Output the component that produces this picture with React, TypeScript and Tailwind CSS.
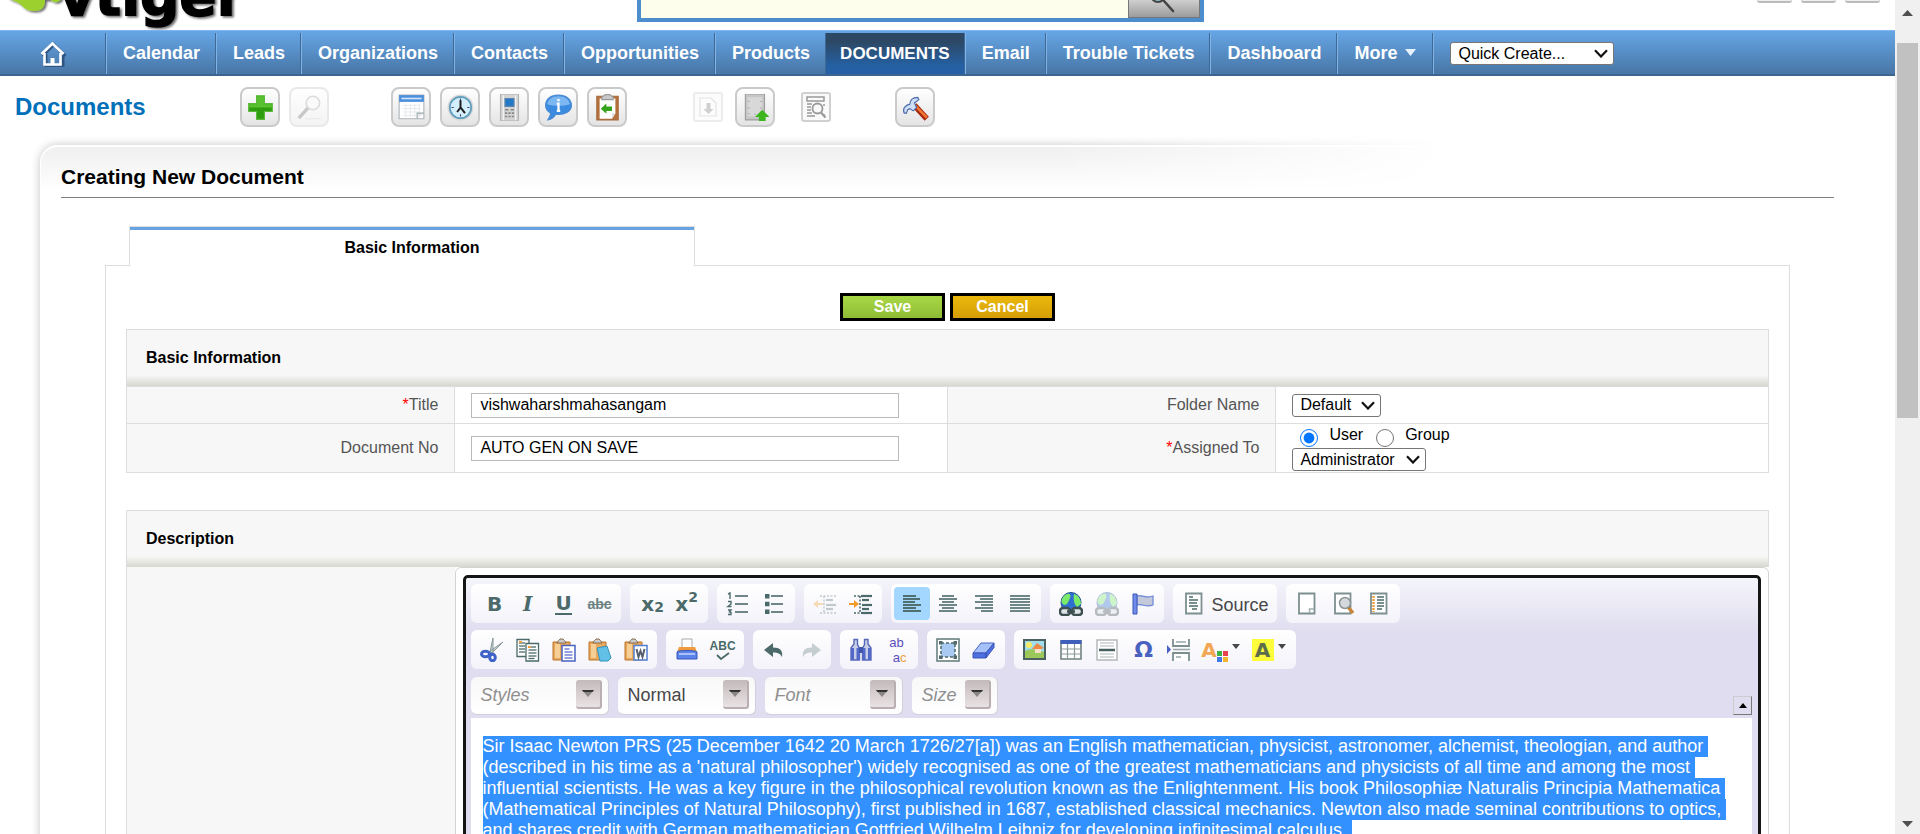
import React from "react";

const INK = "#4b6a69";

/* ---------- shared bits ---------- */

function Svg({ size, children }: { size: number; children: React.ReactNode }) {
  return (
    <svg width={size} height={size} viewBox="0 0 24 24" fill="none" aria-hidden="true" className="block shrink-0">
      {children}
    </svg>
  );
}

function Select({ id, label, value, className }: { id: string; label: string; value: string; className: string }) {
  return (
    <span className={`relative inline-block ${className}`}>
      <select
        id={id}
        aria-label={label}
        defaultValue={value}
        className="block h-[23px] w-full appearance-none rounded-[3px] border border-[#767676] bg-white pl-[7px] text-base leading-5 text-black"
      >
        <option>{value}</option>
      </select>
      <svg width="14" height="9" viewBox="0 0 14 9" aria-hidden="true" className="pointer-events-none absolute top-[7px] right-[6px]">
        <path d="M1 1.200 7 7.500l6-6.300" fill="none" stroke="#111" strokeWidth="2.200" />
      </svg>
    </span>
  );
}

/* ---------- header ---------- */

function Logo() {
  return (
    <svg width="250" height="30" viewBox="0 0 250 30" role="img" aria-label="vtiger">
      <defs>
        <filter id="logoShadow" x="-5%" y="-50%" width="115%" height="200%">
          <feDropShadow dx="2" dy="1.500" stdDeviation="1.300" floodColor="#000" floodOpacity="0.600" />
        </filter>
      </defs>
      <g filter="url(#logoShadow)">
        <path d="M5-6C8 0 16 1 20 4c4 4 7 7 14 7 8 0 11-4 11-11h6c2 3 8 3 10-1V-6Z" fill="#9bd02f" />
        <text x="59" y="15" fontFamily="DejaVu Sans, sans-serif" fontWeight="700" fontSize="55" fill="#000" stroke="#000" strokeWidth="1.500">
          vtiger
        </text>
      </g>
    </svg>
  );
}

function Header() {
  return (
    <header className="flex h-[30px] items-start bg-white">
      <div className="w-[637px] shrink-0">
        <Logo />
      </div>
      <form className="flex h-[22px] w-[567px] shrink-0 border-x-4 border-b-4 border-[#4c8dcd]" onSubmit={(e) => e.preventDefault()}>
        <input aria-label="Search" className="h-full min-w-0 flex-1 bg-[#fdffec] px-2 outline-none" />
        <button
          type="submit"
          aria-label="Find"
          className="flex h-full w-[72px] justify-center border-r border-b border-l border-[#777] bg-linear-to-b from-[#cfcfcf] to-[#9c9c9c]"
        >
          <svg width="34" height="17" viewBox="0 0 34 17" aria-hidden="true">
            <circle cx="11" cy="-5" r="7" fill="#8cc0d0" stroke="#444" strokeWidth="2" />
            <path d="m17 1 9 10" stroke="#444" strokeWidth="2.600" strokeLinecap="round" />
          </svg>
        </button>
      </form>
      <div className="mr-[15px] ml-auto flex gap-[9px]">
        {["User", "Help", "Sign out"].map((n) => (
          <button key={n} aria-label={n} className="h-[3px] w-[35px] rounded-b-[4px] border-b-2 border-[#bbb] bg-[#eee]" />
        ))}
      </div>
    </header>
  );
}

const navItems = ["Calendar", "Leads", "Organizations", "Contacts", "Opportunities", "Products", "Documents", "Email", "Trouble Tickets", "Dashboard"];

function NavBar() {
  return (
    <nav className="flex h-[46px] items-stretch border-t border-b-2 border-t-[#7cb6ee] border-b-[#3c658f] bg-linear-to-b from-[#66a6e6] to-[#4876a6] pt-0.5 text-lg leading-5 font-bold text-white">
      <a href="#home" aria-label="Home" className="flex w-[105px] items-center justify-center">
        <svg width="26" height="26" viewBox="0 0 26 26" aria-hidden="true">
          <path d="M5 12v13h17V12M1.500 14 13 2.500 24.500 14" fill="none" stroke="#2f5580" strokeWidth="3" transform="translate(1 1)" />
          <path d="M4.500 12v11.500h16V12M1.500 13 12.500 2.500 23.500 13" fill="none" stroke="#fff" strokeWidth="2.600" />
          <path d="M10.500 17h4v6h-4z" fill="#fff" />
        </svg>
      </a>
      {navItems.map((n) => {
        const active = n === "Documents";
        return (
          <div key={n} className="flex border-l border-[#3f6a97]">
            <a
              href={`#${n}`}
              className={
                active
                  ? "flex items-center bg-linear-to-b from-[#2c4864] from-20% to-[#2460a3] to-80% px-3.5 text-[17px] uppercase"
                  : "flex items-center border-l border-[#80b3e6] pr-[15px] pb-0.5 pl-4"
              }
            >
              {n}
            </a>
          </div>
        );
      })}
      <div className="flex border-x border-[#3f6a97]">
        <a href="#more" className="flex items-center gap-2 border-l border-[#80b3e6] px-4 pb-0.5">
          More
          <svg width="11" height="7" viewBox="0 0 11 7" aria-hidden="true">
            <path d="M0 0h11L5.500 7z" fill="#e6f2ff" />
          </svg>
        </a>
      </div>
      <div className="flex items-center border-l border-[#80b3e6] pl-4 font-normal">
        <Select id="quick" label="Quick create" value="Quick Create..." className="w-[164px]" />
      </div>
    </nav>
  );
}

/* ---------- module toolbar ---------- */

const toolIcons: Record<string, React.ReactNode> = {
  add: (
    <>
      <path d="M8.500 1.500h7v7h7v7h-7v7h-7v-7h-7v-7h7z" fill="#2f9d10" stroke="#5cb83a" />
      <path d="M9 2h6v7h7v3H2V9h7z" fill="#6bd03e" opacity=".7" />
    </>
  ),
  find: (
    <>
      <circle cx="15" cy="8" r="6" stroke="#aaa" strokeWidth="1.500" fill="#f4f4f4" />
      <path d="m10.500 12.500-8 9" stroke="#777" strokeWidth="3" />
      <path d="M8 22h14" stroke="#ccc" />
    </>
  ),
  calendar: (
    <>
      <path d="M1 1h22v21H1z" fill="#fff" stroke="#aeb4ba" />
      <path d="M1 1h22v6H1z" fill="#4a8edc" />
      <path d="M3 4h18" stroke="#cfe4fa" strokeWidth="1.500" />
      <path d="M4 10h16M4 13h16M4 16h16M4 19h12M7 9v12M11 9v12M15 9v12M19 9v8" stroke="#e2e5e9" strokeWidth=".7" />
      <path d="M17 22v-5h6" stroke="#9aa" fill="#e8e8e8" />
    </>
  ),
  clock: (
    <>
      <circle cx="12" cy="12" r="11.500" fill="#d8d8d8" />
      <circle cx="12" cy="12" r="9.500" fill="#d4eefb" stroke="#5f9dbd" strokeWidth="1.500" />
      <path d="M12 4v2M12 18v2M4 12h2M18 12h2" stroke="#446" />
      <path d="M12 5.500V12l4 5M12 12l-3 4" stroke="#222" strokeWidth="1.800" />
    </>
  ),
  phone: (
    <>
      <path d="M4 0h16v24H4z" fill="#d3d3d3" stroke="#b2b2b2" />
      <path d="M6 1h1v22H6zM17 1h1v22h-1z" fill="#f5f5f5" />
      <path d="M8 4h8v7H8z" fill="#2478c8" stroke="#5b83ab" />
      <path d="M8 14h3M13 14h3M8 17h2M11 17h2M14 17h2M8 20h2M11 20h2M14 20h2" stroke="#888" strokeWidth="1.500" />
    </>
  ),
  chat: (
    <>
      <path d="M12 1C5 1 .5 4.500.5 10c0 3 1.800 5.500 4.500 7-.3 2.500-1 4-2.500 6 3.500-.5 5.500-2 7-5 8 .8 14-2.500 14-8 0-5.500-5-9-11.500-9Z" fill="#3b8be0" stroke="#4a8ad0" />
      <path d="M12 2C6 2 2.500 5 2 9c6 2 14 2 20 0C21.500 5 18 2 12 2Z" fill="#8ec2f5" opacity=".8" />
      <path d="M12 4.500v2M10.500 8.500H12v6.500M10.500 15h3" stroke="#fff" strokeWidth="2" />
    </>
  ),
  clipboard: (
    <>
      <path d="M2.500 2h19v21h-19z" fill="#b5713c" stroke="#a5673a" />
      <path d="M5 4h14v13l-3 5H5z" fill="#fff" />
      <path d="M19 17h-3v5z" fill="#ddd" />
      <path d="M7 3c0-1.500 2-1 3-2.500h4C15 2 17 1.500 17 3v2H7z" fill="#c8c8c8" stroke="#999" />
      <path d="m6 13 5-4.500V11h5v4h-5v2.500z" fill="#35a31d" />
    </>
  ),
  import: (
    <>
      <path d="M4 3h11l5 5v13H4z" stroke="#bbb" strokeWidth="1.200" />
      <path d="M10.500 8h4v6h3L12.500 19 7.500 14h3z" fill="#888" />
    </>
  ),
  export: (
    <>
      <path d="M3 0h17v23H3z" fill="#c6c6c6" stroke="#9d9d9d" />
      <path d="M5 3h13v17H5z" fill="#d8d8d8" />
      <path d="M6 6v1M6 12v1M6 17v1M17 6v1M17 12v1M11 18h1" stroke="#aaa" strokeWidth="1.500" />
      <path d="m18 14 6.500 6.500H21V24h-6v-3.500h-3.500z" fill="#3eb51e" />
    </>
  ),
  duplicates: (
    <>
      <path d="M3 2h17v4H3zM3 9h5M3 12h4M3 15h4M3 18h5M3 21h8M20 9v2M20 19v2" stroke="#999" strokeWidth="1.500" />
      <circle cx="13.500" cy="13.500" r="5" stroke="#999" strokeWidth="1.800" fill="#fafafa" />
      <path d="m17 17.500 4.500 5" stroke="#999" strokeWidth="2.200" />
    </>
  ),
  settings: (
    <>
      <path d="m11 10 11 12" stroke="#a82810" strokeWidth="5" />
      <path d="m11.500 10 10.500 11" stroke="#f47a33" strokeWidth="2.200" />
      <path d="M2 17c-2-4 1-7 5-8 0-3 2-6 7-6l1 2-4 3 2 4-3 3-3-2-2 1-1 3z" fill="#cfdff7" stroke="#4a69a8" />
    </>
  ),
};

function ToolButton({ icon, label, faded, small }: { icon: string; label: string; faded?: boolean; small?: boolean }) {
  const tone = faded ? "opacity-40" : "";
  return small ? (
    <button aria-label={label} className={`flex size-[30px] items-center justify-center rounded-[3px] border-2 border-[#d0d0d0] bg-[#fafafa] ${tone}`}>
      <Svg size={24}>{toolIcons[icon]}</Svg>
    </button>
  ) : (
    <button
      aria-label={label}
      className={`flex size-10 items-center justify-center rounded-[8px] border-2 border-[#cacaca] bg-linear-to-b from-white to-[#e4e4e4] ${tone}`}
    >
      <Svg size={27}>{toolIcons[icon]}</Svg>
    </button>
  );
}

function ModuleBar() {
  return (
    <div className="flex h-[59px] items-center pt-[3px]">
      <h1 className="w-[240px] shrink-0 pl-[15px] text-2xl font-bold text-[#0070ba]">
        <a href="#documents">Documents</a>
      </h1>
      <div className="flex gap-[9px]">
        <ToolButton icon="add" label="Create document" />
        <ToolButton icon="find" label="Search documents" faded />
      </div>
      <div className="ml-[62px] flex gap-[9px]">
        <ToolButton icon="calendar" label="Open calendar" />
        <ToolButton icon="clock" label="World clock" />
        <ToolButton icon="phone" label="Calculator" />
        <ToolButton icon="chat" label="Chat" />
        <ToolButton icon="clipboard" label="Last viewed" />
      </div>
      <div className="ml-[66px] flex items-center gap-3">
        <ToolButton icon="import" label="Import" faded small />
        <ToolButton icon="export" label="Export" />
      </div>
      <div className="ml-[26px]">
        <ToolButton icon="duplicates" label="Find duplicates" small />
      </div>
      <div className="ml-16">
        <ToolButton icon="settings" label="Settings" />
      </div>
    </div>
  );
}

/* ---------- form ---------- */

function SectionHead({ children }: { children: React.ReactNode }) {
  return (
    <h2 className="flex h-[57px] flex-col justify-between border border-b-0 border-[#ddd] bg-[#f7f7f7] pt-4 text-base leading-6 font-bold">
      <span className="pl-[19px]">{children}</span>
      <span className="h-[10px] bg-linear-to-b from-[#f5f5f3] to-[#d6d7d0]" />
    </h2>
  );
}

const labelCell = "border border-[#ddd] bg-[#f7f7f7] pr-4 text-right align-middle font-normal text-[#545454]";
const valueCell = "border border-[#ddd] pl-4 align-middle";
const textBox = "block h-[25px] w-[428px] border border-[#bababa] bg-white px-2 text-base text-black";

function BasicInformation() {
  return (
    <section>
      <SectionHead>Basic Information</SectionHead>
      <table className="w-full table-fixed border-collapse text-base leading-5">
        <colgroup>
          <col className="w-[20%]" />
          <col className="w-[30%]" />
          <col className="w-[20%]" />
          <col className="w-[30%]" />
        </colgroup>
        <tbody>
          <tr className="h-[37px]">
            <th scope="row" className={labelCell}>
              <label htmlFor="title">
                <span className="text-[#f00]">*</span>Title
              </label>
            </th>
            <td className={valueCell}>
              <input id="title" defaultValue="vishwaharshmahasangam" className={textBox} />
            </td>
            <th scope="row" className={labelCell}>
              <label htmlFor="folder">Folder Name</label>
            </th>
            <td className={valueCell}>
              <div className="flex">
                <Select id="folder" label="Folder Name" value="Default" className="w-[89px]" />
              </div>
            </td>
          </tr>
          <tr className="h-[49px]">
            <th scope="row" className={labelCell}>
              <label htmlFor="docno">Document No</label>
            </th>
            <td className={valueCell}>
              <input id="docno" defaultValue="AUTO GEN ON SAVE" readOnly className={textBox} />
            </td>
            <th scope="row" className={labelCell}>
              <label htmlFor="assignee">
                <span className="text-[#f00]">*</span>Assigned To
              </label>
            </th>
            <td className={valueCell}>
              <div className="flex h-[23px] items-start pl-2">
                <input id="user" type="radio" name="assign" defaultChecked className="mt-1 size-[18px] accent-[#0075ff]" />
                <label htmlFor="user" className="ml-[11px]">
                  User
                </label>
                <input id="group" type="radio" name="assign" className="mt-1 ml-[13px] size-[18px]" />
                <label htmlFor="group" className="ml-[11px]">
                  Group
                </label>
              </div>
              <div className="flex">
                <Select id="assignee" label="Assigned To" value="Administrator" className="w-[134px]" />
              </div>
            </td>
          </tr>
        </tbody>
      </table>
    </section>
  );
}

/* ---------- rich text editor ---------- */

const lines = (xs: [number, number, number][], w = 1.6) =>
  xs.map(([x, y, len], i) => <path key={i} d={`M${x} ${y}h${len}`} stroke={INK} strokeWidth={w} />);

const clip = (
  <>
    <path d="M1 4h17v18H1z" fill="#e9a95c" stroke="#b9752c" />
    <path d="M3 6h5v14H3z" fill="#f6cf97" />
    <path d="M5 5c0-2 2-2 3-4h3c1 2 3 2 3 4z" fill="#ccc" stroke="#8a6a4a" />
  </>
);
const globe = (
  <>
    <circle cx="12" cy="10.500" r="10" fill="#2f6fd0" stroke="#1f4b94" />
    <path d="M5 4c4-4 8-2 6 2s-2 6-5 7C1 12 2 7 5 4ZM15 2c5 1 7 6 7 10l-4 3c-3-3-4-8-3-13Z" fill="#7bea6b" />
    <rect x="1" y="16" width="10" height="7" rx="3" stroke="#3e4f50" strokeWidth="2.500" fill="#dfe5e5" />
    <rect x="13" y="16" width="10" height="7" rx="3" stroke="#3e4f50" strokeWidth="2.500" fill="#dfe5e5" />
    <path d="M8 19.500h8" stroke="#3e4f50" strokeWidth="2.500" />
  </>
);
const page = <path d="M4 1.500h15.500v20H4z" fill="#fff" stroke="#7d8f8f" strokeWidth="1.800" />;

const editorIcons: Record<string, React.ReactNode> = {
  numbered: (
    <>
      {lines([[9, 4, 13], [9, 12, 13], [9, 20, 13]])}
      <path d="M2 2l2-1v6M2 9.500h3V12L2 14.500h3.500M2 18h3l-1.500 2 1.500.5v2H2" stroke={INK} strokeWidth="1.400" />
    </>
  ),
  bulleted: (
    <>
      {lines([[9, 4, 12], [9, 12, 12], [9, 20, 12]])}
      <path d="M3 2h4.500v4.500H3zM3 9.700h4.500v4.500H3zM3 17.500h4.500V22H3z" fill={INK} />
    </>
  ),
  outdent: (
    <g opacity=".32">
      {lines([[13, 8, 7], [13, 13, 10], [13, 17, 7]], 2.2)}
      <path d="M7 4h16M7 21h16M11 4v17" stroke={INK} strokeWidth="1.500" strokeDasharray="2 1.500" />
      <path d="M0 12l5-4v3h5v2H5v3z" fill="#f39b2a" />
    </g>
  ),
  indent: (
    <>
      {lines([[12, 4, 11], [13, 8, 7], [13, 13, 10], [13, 17, 7], [12, 21, 11]], 2.200)}
      <path d="M5 4h6M5 21h6M11 4v17" stroke={INK} strokeWidth="1.500" strokeDasharray="2 1.500" />
      <path d="M10 12 5 8v3H0v2h5v3z" fill="#f39b2a" />
    </>
  ),
  left: lines([[3, 4, 13], [3, 7, 17], [3, 10, 12], [3, 13, 18], [3, 16, 13], [3, 19, 18]], 1.900),
  center: lines([[6, 4, 12], [3, 7, 18], [6, 10, 12], [3, 13, 18], [6, 16, 12], [3, 19, 18]]),
  right: lines([[3, 4, 18], [8, 7, 13], [3, 10, 18], [9, 13, 12], [3, 16, 18], [9, 19, 12]]),
  justify: lines([[2, 4, 20], [2, 7, 20], [2, 10, 20], [2, 13, 20], [2, 16, 20], [2, 19, 20]]),
  link: globe,
  unlink: <g opacity=".35">{globe}</g>,
  anchor: (
    <>
      <path d="M6 4c5-2 7 3 16 0v9c-8 3-10-2-16 0z" fill="#c3c9da" stroke="#6a86d8" strokeWidth="1.200" />
      <path d="M2 2h4v20H2z" fill="#6f8de8" stroke="#3d54b8" />
    </>
  ),
  source: (
    <>
      {page}
      {lines([[7, 5, 4], [7, 8, 9], [7, 11, 8], [7, 14, 9], [10, 17, 5]], 1.500)}
    </>
  ),
  newpage: (
    <>
      {page}
      <path d="M14.500 21v-4h4.500" stroke="#9fb0b0" strokeWidth="1.500" />
    </>
  ),
  preview: (
    <>
      {page}
      <path d="m17 15 5 6" stroke="#c98436" strokeWidth="3.500" />
      <circle cx="14" cy="11" r="5.500" fill="#d5d8dc" stroke="#8b9494" strokeWidth="1.500" />
    </>
  ),
  templates: (
    <>
      {page}
      <path d="M6.500 4v16" stroke="#f0a040" strokeWidth="2.500" strokeDasharray="2 1" />
      {lines([[10, 5, 7], [10, 8, 7], [10, 11, 7], [10, 14, 7], [10, 17, 5]], 1.500)}
    </>
  ),
  cut: (
    <>
      <path d="m13 0-3 14 3 1zM23 4 9 14l2 2z" fill="#cdd6d6" stroke="#859797" />
      <ellipse cx="5.500" cy="16" rx="4" ry="2.700" stroke="#3f62c9" strokeWidth="3" />
      <ellipse cx="12.500" cy="19.500" rx="2.800" ry="3.300" stroke="#3f62c9" strokeWidth="3" />
    </>
  ),
  copy: (
    <>
      <path d="M1 1.500h12v17H1z" fill="#fff" stroke={INK} strokeWidth="1.300" />
      {lines([[3, 5, 6], [3, 8, 6], [3, 11, 6], [3, 14, 6]], 1.300)}
      <path d="M10 5.500h12.500V23H10z" fill="#fff" stroke={INK} strokeWidth="1.300" />
      {lines([[15, 9, 5], [12.5, 12, 8], [12.5, 15, 8], [12.500, 18, 8], [12.500, 20.500, 6]], 1.300)}
      <path d="M3 4h3M12 9h3" stroke="#f0a040" strokeWidth="2" />
    </>
  ),
  paste: (
    <>
      {clip}
      <path d="M10 7.500h13V23H10z" fill="#fff" stroke="#4a62c0" strokeWidth="1.500" />
      <path d="M12.500 11h5M12.500 14h8M12.500 17h8M12.500 20h8" stroke="#7183d4" strokeWidth="1.300" />
    </>
  ),
  pastetext: (
    <>
      {clip}
      <path d="m9 10 10-2 4 12-3 3h-8z" fill="#62bfe6" stroke="#3594bd" />
    </>
  ),
  pasteword: (
    <>
      {clip}
      <path d="M10 7.500h13V22H10z" fill="#fff" stroke="#4f7fd0" strokeWidth="1.500" />
      <path d="m12.500 11 2 8 2-6 2 6 2-8" stroke="#555f70" strokeWidth="2" />
    </>
  ),
  print: (
    <>
      <path d="M7 1h10v10H7z" fill="#fff" stroke="#aaa" />
      <path d="M4 9h16l2 5H2z" fill="#ef9a3c" />
      <path d="M2 14c0-2 20-2 20 0v7H2z" fill="#5c83ea" stroke="#3657bd" />
      <path d="M4 16h16" stroke="#c5d4ff" strokeWidth="1.500" />
    </>
  ),
  undo: <path d="M2 12 11 5v4.500c7 0 10 3 9 9.500-2-3.500-4-4.500-9-4.500V19z" fill={INK} />,
  redo: <path d="M23 12 14 5v4.500c-7 0-10 3-9 9.500 2-3.500 4-4.500 9-4.500V19z" fill={INK} opacity=".3" />,
  find: (
    <>
      <path d="M5 1.500h3.500v5l2 4V22H2V10l3-4zM19 1.500h-3.500v5l-2 4V22H22V10l-3-4z" fill="#c7cfe6" stroke="#5668b8" strokeWidth="1.400" />
      <path d="M2 10h3v12H2zM19 10h3v12h-3zM7.500 10h3v12h-3zM13.500 10h3v12h-3z" fill="#5269c8" />
      <path d="M10 9h4v6h-4z" fill="#4056ad" />
    </>
  ),
  selectall: (
    <>
      <path d="M1 1h22v22H1z" fill="#fff" stroke="#60797a" strokeWidth="1.500" />
      <path d="M5 5h14v14H5z" fill="#a9cbf3" stroke="#526b6c" strokeWidth="1.600" strokeDasharray="3 2" />
      <path d="M3 3h3.500v3.500H3zM17.500 3H21v3.500h-3.500zM3 17.500h3.500V21H3zM17.500 17.500H21V21h-3.500z" fill="#526b6c" />
    </>
  ),
  eraser: (
    <>
      <path d="M9 5h13L14 15H1z" fill="#a6c1fa" stroke="#4b66c4" />
      <path d="M1 15h13v5H1zM14 15l8-10v4.500L14 20z" fill="#4d6fe0" stroke="#3a55b5" />
    </>
  ),
  image: (
    <>
      <path d="M1 2h21v19H1z" fill="#9fdcec" stroke="#4c6060" strokeWidth="2" />
      <path d="M2 13c5-3 12-2 19 1v6H2z" fill="#9cc85a" />
      <circle cx="6" cy="7" r="3" fill="#fcec60" />
      <path d="m9 11 5-6 7 5-3 1v4h-6v-4z" fill="#ec8a45" />
      <path d="M12 11h6v4h-6z" fill="#f7e0c8" />
    </>
  ),
  table: (
    <>
      <path d="M2 3h20v18H2z" fill="#fff" stroke="#72807f" strokeWidth="1.600" />
      <path d="M1.500 2h21v4h-21z" fill="#3f5fbd" />
      <path d="M2 11h20M2 16h20M8.500 6v15M15.500 6v15" stroke="#8c9a99" strokeWidth="1.200" />
    </>
  ),
  rule: (
    <>
      <path d="M2 2h20v20H2z" fill="#fff" stroke="#b5b9b9" strokeWidth="1.500" />
      <path d="M5 5h14M5 8h14M5 16h14M5 19h14" stroke="#ccd0d0" strokeWidth="1.400" />
      <path d="M4 12h16" stroke="#47605f" strokeWidth="2.500" />
    </>
  ),
  pagebreak: (
    <>
      <path d="M6 1v7h16V1M6 23v-8h16v8" fill="#fff" stroke="#7d8f8f" strokeWidth="1.800" />
      <path d="M9 4h10M9 19h5M6 11.500h17" stroke="#9aa8a8" strokeWidth="1.400" />
      <path d="m0 7 4 4.500L0 16z" fill="#4a5fc4" />
    </>
  ),
};

function IconButton({ name, disabled, active }: { name: string; disabled?: boolean; active?: boolean }) {
  return (
    <button
      aria-label={name}
      disabled={disabled}
      className={`flex h-[33px] w-9 items-center justify-center rounded-[4px] ${active ? "bg-[#a3d7ff]" : ""}`}
    >
      <Svg size={24}>{editorIcons[name]}</Svg>
    </button>
  );
}

function GlyphButton({ label, className, children }: { label: string; className: string; children: React.ReactNode }) {
  return (
    <button aria-label={label} className={`flex h-[33px] w-9 items-center justify-center ${className}`}>
      {children}
    </button>
  );
}

function Group({ children }: { children: React.ReactNode }) {
  return <div className="flex h-[39px] items-center rounded-[6px] bg-linear-to-b from-white to-[#f3f3fa] px-[3px]">{children}</div>;
}

function Combo({ label, muted, className }: { label: string; muted?: boolean; className: string }) {
  return (
    <button
      className={`flex h-[38px] items-center justify-between rounded-[6px] border-r border-b border-[#d0d0da] bg-linear-to-b from-[#f8f8f8] to-white pr-1.5 pb-0.5 pl-2.5 text-lg ${className} ${muted ? "text-[#8f8f8f] italic" : "text-[#474747]"}`}
    >
      {label}
      <span className="flex h-[29px] w-[26px] items-center justify-center rounded-[3px] border-r-2 border-b-2 border-[#b9aeb0] bg-linear-to-b from-[#c3babb] to-[#e9e2e4]">
        <svg width="12" height="7" viewBox="0 0 12 7" aria-hidden="true">
          <path d="M0 0h12L6 7z" fill="#8b8587" />
          <path d="M0 0h12l-1.500 2h-9z" fill="#333" />
        </svg>
      </span>
    </button>
  );
}

const Caret = () => (
  <svg width="8" height="5" viewBox="0 0 8 5" aria-hidden="true" className="mb-1.5">
    <path d="M0 0h8L4 5z" fill="#474747" />
  </svg>
);

function EditorToolbar() {
  return (
    <div className="flex flex-col gap-[7px] pt-1.5 pb-[3px]">
      <div className="flex gap-[9px]">
        <Group>
          <GlyphButton label="Bold" className="pl-1.5 font-['DejaVu_Sans'] text-xl font-bold text-[#4b6a69]">B</GlyphButton>
          <GlyphButton label="Italic" className="font-['DejaVu_Serif'] text-xl font-bold text-[#4b6a69] italic">I</GlyphButton>
          <GlyphButton label="Underline" className="font-['DejaVu_Sans'] text-xl font-bold text-[#4b6a69]">
            <span className="border-b-2 border-[#4b6a69] leading-5">U</span>
          </GlyphButton>
          <GlyphButton label="Strike through" className="text-sm font-bold text-[#6d8382] line-through">abc</GlyphButton>
        </Group>
        <Group>
          <GlyphButton label="Subscript" className="pl-1 font-['DejaVu_Sans'] text-xl font-bold text-[#4b6a69]">
            x<sub className="text-sm">2</sub>
          </GlyphButton>
          <GlyphButton label="Superscript" className="font-['DejaVu_Sans'] text-xl font-bold text-[#4b6a69]">
            x<sup className="text-sm">2</sup>
          </GlyphButton>
        </Group>
        <Group>
          <IconButton name="numbered" />
          <IconButton name="bulleted" />
        </Group>
        <Group>
          <IconButton name="outdent" disabled />
          <IconButton name="indent" />
        </Group>
        <Group>
          <IconButton name="left" active />
          <IconButton name="center" />
          <IconButton name="right" />
          <IconButton name="justify" />
        </Group>
        <Group>
          <IconButton name="link" />
          <IconButton name="unlink" disabled />
          <IconButton name="anchor" />
        </Group>
        <Group>
          <button className="flex h-[33px] w-[98px] items-center gap-1.5 pl-1.5 text-lg text-[#474747]">
            <Svg size={24}>{editorIcons.source}</Svg>
            <span className="pt-0.5">Source</span>
          </button>
        </Group>
        <Group>
          <IconButton name="newpage" />
          <IconButton name="preview" />
          <IconButton name="templates" />
        </Group>
      </div>
      <div className="flex gap-[9px]">
        <Group>
          <IconButton name="cut" />
          <IconButton name="copy" />
          <IconButton name="paste" />
          <IconButton name="pastetext" />
          <IconButton name="pasteword" />
        </Group>
        <Group>
          <IconButton name="print" />
          <GlyphButton label="Check spelling" className="flex-col text-xs leading-3 font-bold text-[#4b6a69]">
            ABC
            <svg width="14" height="8" viewBox="0 0 14 8" aria-hidden="true">
              <path d="m1 3 4 4 8-6" fill="none" stroke={INK} strokeWidth="1.800" />
            </svg>
          </GlyphButton>
        </Group>
        <Group>
          <IconButton name="undo" />
          <IconButton name="redo" disabled />
        </Group>
        <Group>
          <IconButton name="find" />
          <GlyphButton label="Replace" className="flex-col text-[13px] leading-[15px] text-[#5a4fb8]">
            <span>ab</span>
            <span className="pl-1.5">
              a<span className="text-[#f0a040]">c</span>
            </span>
          </GlyphButton>
        </Group>
        <Group>
          <IconButton name="selectall" />
          <IconButton name="eraser" />
        </Group>
        <Group>
          <IconButton name="image" />
          <IconButton name="table" />
          <IconButton name="rule" />
          <GlyphButton label="Special character" className="pl-0.5 font-['DejaVu_Sans'] text-[22px] font-bold text-[#4a62bf]">Ω</GlyphButton>
          <IconButton name="pagebreak" />
          <button aria-label="Text colour" className="flex h-[33px] w-12 items-center justify-center gap-1 font-['DejaVu_Sans'] text-xl leading-6 font-bold text-[#f2a754]">
            <span className="flex items-end">
              A
              <svg width="11" height="11" viewBox="0 0 11 11" aria-hidden="true">
                <path d="M0 0h5v5H0z" fill="#3cb043" />
                <path d="M6 0h5v5H6z" fill="#e8424a" />
                <path d="M0 6h5v5H0z" fill="#4179e8" />
                <path d="M6 6h5v5H6z" fill="#f5b52e" />
              </svg>
            </span>
            <Caret />
          </button>
          <button aria-label="Background colour" className="flex h-[33px] w-12 items-center justify-center gap-1 font-['DejaVu_Sans'] text-xl font-bold text-[#5d6c4b]">
            <span className="flex size-[22px] items-center justify-center bg-[#fdfd3c]">A</span>
            <Caret />
          </button>
        </Group>
      </div>
      <div className="flex items-end gap-[9px] pt-px">
        <Combo label="Styles" muted className="w-[138px]" />
        <Combo label="Normal" className="w-[138px]" />
        <Combo label="Font" muted className="w-[138px]" />
        <Combo label="Size" muted className="w-[86px]" />
        <button
          aria-label="Collapse toolbar"
          className="ml-auto flex size-[19px] items-center justify-center border border-t-[#ccc] border-r-[#777] border-b-[#777] border-l-[#ccc]"
        >
          <svg width="8" height="5" viewBox="0 0 8 5" aria-hidden="true">
            <path d="M0 5h8L4 0z" fill="#000" />
          </svg>
        </button>
      </div>
    </div>
  );
}

const description = [
  "Sir Isaac Newton PRS (25 December 1642 20 March 1726/27[a]) was an English mathematician, physicist, astronomer, alchemist, theologian, and author ",
  "(described in his time as a 'natural philosopher') widely recognised as one of the greatest mathematicians and physicists of all time and among the most ",
  "influential scientists. He was a key figure in the philosophical revolution known as the Enlightenment. His book Philosophiæ Naturalis Principia Mathematica ",
  "(Mathematical Principles of Natural Philosophy), first published in 1687, established classical mechanics. Newton also made seminal contributions to optics, ",
  "and shares credit with German mathematician Gottfried Wilhelm Leibniz for developing infinitesimal calculus. ",
];

function Description() {
  return (
    <section className="mt-[37px]">
      <SectionHead>Description</SectionHead>
      <div className="flex">
        <div className="w-[20%] shrink-0 border-l border-[#ddd] bg-[#f7f7f7]" />
        <div className="min-w-0 flex-1 rounded-[6px] border border-[#d3d3d3] bg-white p-[7px]">
          <div className="rounded-[5px] border-[3px] border-[#141616] bg-[#dfddef]">
            <div className="rounded-t-[3px] bg-linear-to-b from-[#f5f5fb] to-[#dfddef] to-[55px] pr-1.5 pl-[5px]">
              <EditorToolbar />
              <div
                role="textbox"
                aria-label="Description"
                className="h-[300px] overflow-hidden bg-white pt-[18px] pl-3 text-lg leading-[21px] text-white"
              >
                {description.map((line) => (
                  <div key={line} className="w-fit bg-[#3390ff] whitespace-pre">
                    {line}
                  </div>
                ))}
              </div>
            </div>
          </div>
        </div>
      </div>
    </section>
  );
}

function FormPanel() {
  return (
    <main className="relative isolate ml-[30px] pr-[61px] pl-[31px]">
      <div className="absolute inset-0 -z-10 overflow-hidden mask-r-from-55% mask-r-to-76% pt-[10px] pl-[10px]">
        <div className="h-full rounded-tl-[18px] border-t-2 border-l border-white bg-linear-to-b from-[#f0f0f0] to-white to-[45px] shadow-[0_0_10px_#c4c4c4]" />
      </div>
      <h2 className="border-b border-[#808080] pt-[22px] text-[21px] leading-10 font-bold">Creating New Document</h2>
      <div className="mx-11 mt-7">
        <div className="flex h-10">
          <div className="w-6 border-b border-[#ddd]" />
          <button className="w-[566px] border-x border-t border-[#ddd] bg-white text-base font-bold">
            <span className="flex h-full items-center justify-center border-t-[3px] border-[#66a3e0]">Basic Information</span>
          </button>
          <div className="flex-1 border-b border-[#ddd]" />
        </div>
        <div className="border-x border-[#ddd] bg-white px-5 pt-[27px]">
          <div className="mb-2 flex justify-center gap-[5px] text-base font-bold text-white">
            <button className="h-7 w-[105px] border-[3px] border-black bg-linear-to-b from-[#a8d845] to-[#8fbc36] leading-5">Save</button>
            <button className="h-7 w-[105px] border-[3px] border-black bg-linear-to-b from-[#ebb80c] to-[#d59f06] leading-5">Cancel</button>
          </div>
          <BasicInformation />
          <Description />
        </div>
      </div>
    </main>
  );
}

function ScrollTrack() {
  return (
    <div aria-hidden="true" className="flex w-[25px] shrink-0 flex-col items-center bg-[#f0f0f0]">
      <svg width="11" height="43" viewBox="0 0 11 43">
        <path d="M0 16h11L5.500 10z" fill="#505050" />
      </svg>
      <div className="h-[45%] w-[21px] bg-[#c1c1c1]" />
      <svg width="11" height="16" viewBox="0 0 11 16" className="mt-auto">
        <path d="M0 3h11L5.500 9z" fill="#505050" />
      </svg>
    </div>
  );
}

export default function App() {
  return (
    <div className="flex h-screen overflow-hidden bg-white font-['Liberation_Sans',Arial,sans-serif] text-black">
      <div className="min-w-0 flex-1 overflow-hidden">
        <Header />
        <NavBar />
        <ModuleBar />
        <FormPanel />
      </div>
      <ScrollTrack />
    </div>
  );
}
